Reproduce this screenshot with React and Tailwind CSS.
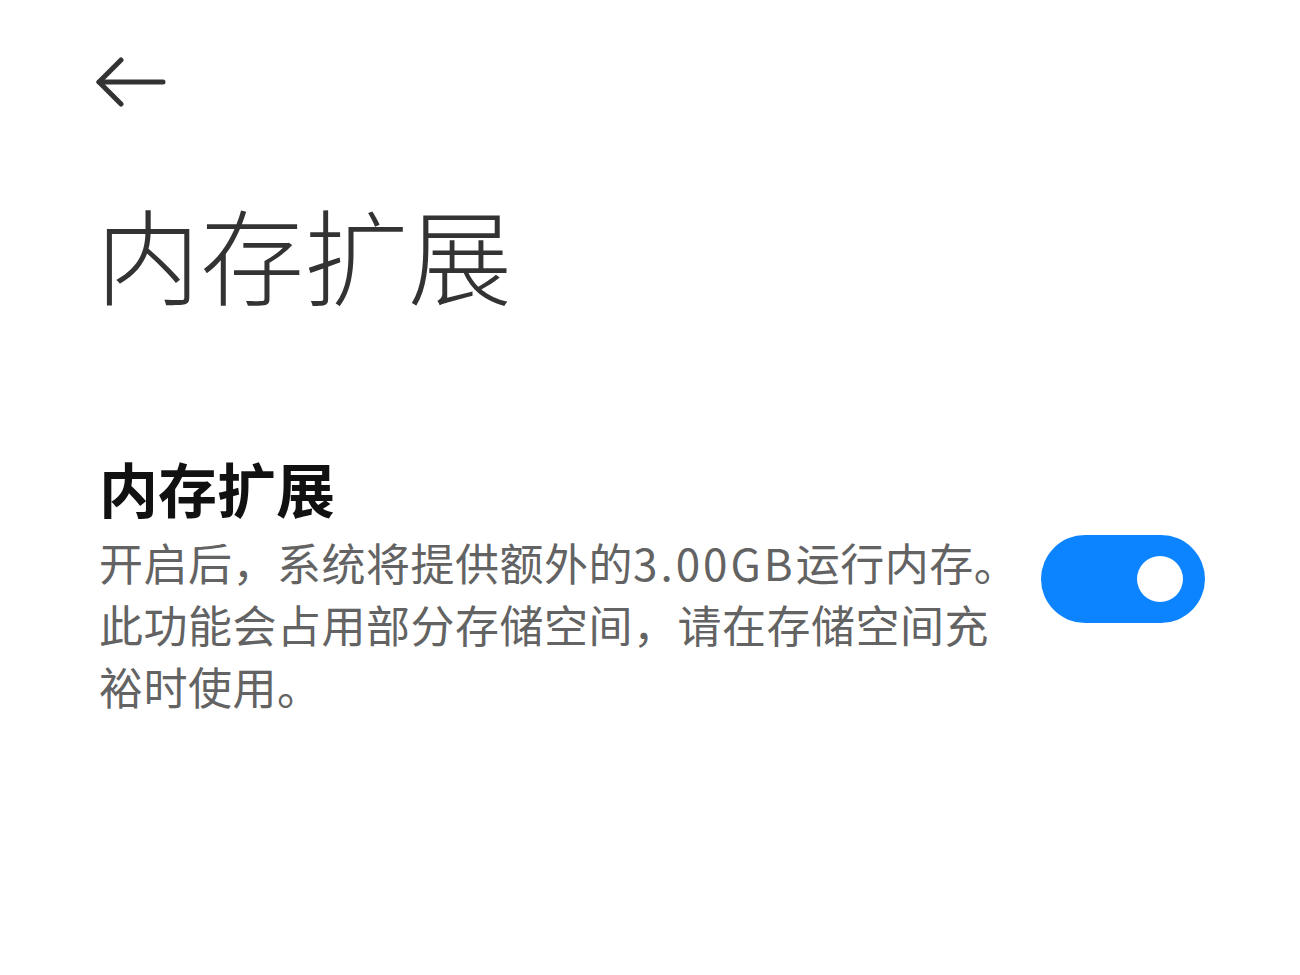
import React from 'react';

const BackArrow = () => (
  <svg width="72" height="50" viewBox="0 0 72 50" fill="none" stroke="#333333" strokeWidth="5" strokeLinecap="round" strokeLinejoin="round">
    <path d="M3 25 H67" />
    <path d="M25 3 L3 25 L25 47" />
  </svg>
);

const Toggle = ({ on }) => (
  <div className={`w-[164px] h-[88px] rounded-full flex items-center px-[22px] ${on ? 'bg-[#0d84ff] justify-end' : 'bg-[#e6e6e6] justify-start'}`}>
    <div className="w-[46px] h-[46px] rounded-full bg-white" />
  </div>
);

export default function App() {
  return (
    <div
      className="w-[1300px] h-[975px] bg-white overflow-hidden"
      style={{ fontFamily: '"Noto Sans CJK SC", "Noto Sans", sans-serif' }}
    >
      <div className="pl-[96px] pt-[57px]">
        <BackArrow />
      </div>

      <h1 className="pl-[96px] mt-[94px] text-[104px] leading-none font-light text-[#333333]">
        内存扩展
      </h1>

      <div className="flex items-start pl-[99px] pr-[95px] mt-[147px]">
        <div className="whitespace-nowrap">
          <div className="text-[59px] leading-[72px] font-bold text-[#111111]">内存扩展</div>
          <p className="mt-[7px] text-[44px] leading-[62px] tracking-[0.5px] text-[#636363]">
            开启后，系统将提供额外的<span className="tracking-[3px]">3.00GB</span>运行内存。
            <br />
            此功能会占用部分存储空间，请在存储空间充
            <br />
            裕时使用。
          </p>
        </div>
        <div className="ml-auto mt-[83px]">
          <Toggle on />
        </div>
      </div>
    </div>
  );
}
